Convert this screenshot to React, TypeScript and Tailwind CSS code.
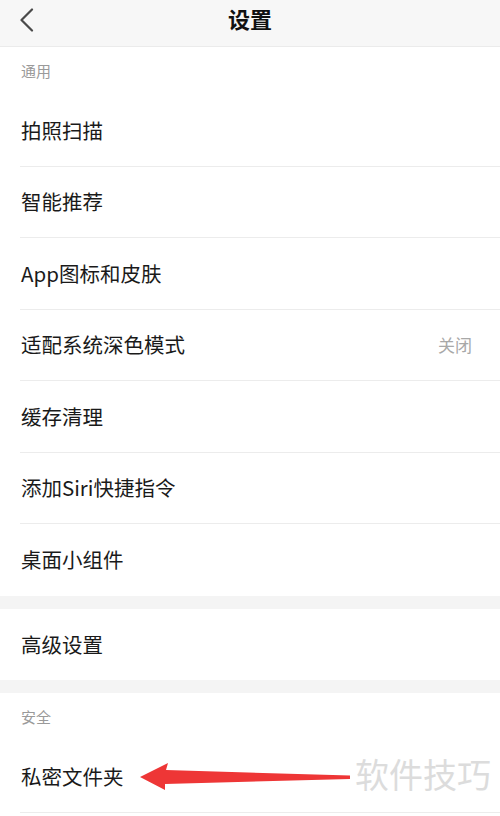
const font = { fontFamily: '"Noto Sans CJK SC", "Noto Sans", sans-serif' };

type Row = { label: string; value?: string; last?: boolean };

const general: Row[] = [
  { label: "拍照扫描" },
  { label: "智能推荐" },
  { label: "App图标和皮肤" },
  { label: "适配系统深色模式", value: "关闭" },
  { label: "缓存清理" },
  { label: "添加Siri快捷指令" },
  { label: "桌面小组件", last: true },
];

function SectionTitle({ text }: { text: string }) {
  return (
    <div className="h-[48px] flex items-center pl-[21px] text-[15px] text-[#9a9a9a]">
      {text}
    </div>
  );
}

function SettingRow({ label, value, last }: Row) {
  return (
    <div className="pl-[20px]">
      <div
        className={
          "h-[71.5px] flex items-center justify-between pr-[28px] " +
          (last ? "" : "border-b border-[#ececec]")
        }
      >
        <span className="text-[20.5px] text-[#1a1a1a] pl-[1px]">{label}</span>
        {value && <span className="text-[17px] text-[#a8a8a8]">{value}</span>}
      </div>
    </div>
  );
}

export default function App() {
  return (
    <div className="w-[500px] h-[816px] overflow-hidden bg-[#f4f4f4]" style={font}>
      <div className="relative h-[47px] bg-[#f7f7f7] border-b border-[#ebebeb] flex items-center justify-center">
        <svg
          className="absolute left-[19px] top-[8px]"
          width="16"
          height="24"
          viewBox="0 0 16 24"
          fill="none"
        >
          <path d="M13 1.5 L2.5 12 L13 22.5" stroke="#4a4a4a" strokeWidth="2.2" strokeLinecap="round" strokeLinejoin="round" />
        </svg>
        <span className="text-[22px] font-bold text-[#111] -mt-[10px]">设置</span>
      </div>

      <div className="bg-white">
        <SectionTitle text="通用" />
        {general.map((r) => (
          <SettingRow key={r.label} {...r} />
        ))}
      </div>

      <div className="h-[13px]" />
      <div className="bg-white">
        <SettingRow label="高级设置" last />
      </div>

      <div className="h-[13px]" />
      <div className="relative bg-white">
        <SectionTitle text="安全" />
        <SettingRow label="私密文件夹" />
        <div className="h-[10px]" />

        <svg
          className="absolute left-[138px] top-[60px]"
          width="216"
          height="40"
          viewBox="0 0 216 40"
        >
          <polygon
            points="2,24 30,10 28,17 212,22.5 212,26 27,31 27,37"
            fill="#ee3636"
          />
        </svg>
        <div className="absolute left-[352px] top-[60px] bg-white pl-[3px] pr-[6px] text-[34px] leading-[42px] text-[#dcdcdc]">
          软件技巧
        </div>
      </div>
    </div>
  );
}
